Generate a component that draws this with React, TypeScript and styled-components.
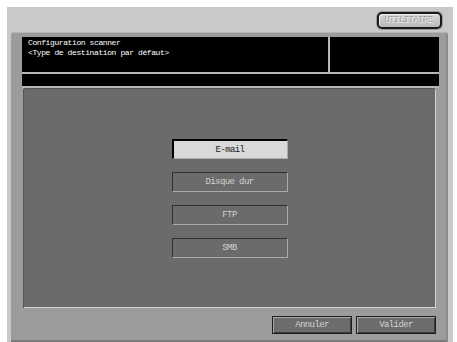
import styled, { createGlobalStyle } from 'styled-components'

const GlobalStyle = createGlobalStyle`
  html, body {
    margin: 0;
    padding: 0;
    background: #ffffff;
  }
  body {
    font-family: "Liberation Mono", "DejaVu Sans Mono", monospace;
  }
`

const Screen = styled.div`
  width: 457px;
  height: 342px;
  padding: 7px 4px 0 7px;
  box-sizing: border-box;
  background: #ffffff;
`

const Frame = styled.div`
  height: 335px;
  background: #c9c9c9;
  display: flex;
  flex-direction: column;
  box-sizing: border-box;
  padding: 5px 5px 0 4px;
`

const TopBar = styled.div`
  display: flex;
  justify-content: flex-end;
  padding-right: 6px;
  height: 20px;
`

const UtilButton = styled.button`
  width: 65px;
  height: 17px;
  border: 2px solid #1a1a1a;
  border-radius: 5px;
  background: linear-gradient(#d6d6d6, #b9b9b9);
  box-shadow: inset 1px 1px 0 #eeeeee, 0 0 0 1px #9a9a9a;
  font-family: "Liberation Mono", monospace;
  font-size: 9px;
  letter-spacing: -0.6px;
  color: #e6e6e6;
  text-shadow: -1px -1px 0 #999999;
  padding: 0;
`

const Panel = styled.div`
  flex: 1;
  background: #9c9c9c;
  border-radius: 3px 3px 0 0;
  box-shadow: inset 0 1px 0 #b4b4b4, inset -2px 0 0 #8a8a8a, inset 0 -2px 0 #7a7a7a;
  padding: 5px 9px 0 11px;
  display: flex;
  flex-direction: column;
`

const Header = styled.div`
  height: 35px;
  background: #000000;
  display: flex;
  border-bottom: 2px solid #b7b7b7;
`

const Title = styled.div`
  flex: 1;
  color: #ffffff;
  padding: 1px 0 0 6px;
  border-right: 2px solid #b7b7b7;
`

const TitleLine = styled.div`
  font-size: 8px;
  line-height: 9.5px;
  letter-spacing: -0.4px;
  white-space: pre;
`

const HeaderSide = styled.div`
  width: 109px;
`

const MessageBar = styled.div`
  height: 12px;
  background: #000000;
  border-bottom: 2px solid #b7b7b7;
`

const Content = styled.div`
  margin: 0 3px 0 1px;
  height: 219px;
  background: #6b6b6b;
  border-radius: 3px 3px 0 0;
  box-shadow: inset 1px 1px 0 #555555, inset -1px -1px 0 #d4d4d4;
  display: flex;
  flex-direction: column;
  align-items: center;
  justify-content: center;
  gap: 13px;
  padding-top: 1px;
`

const Choice = styled.button<{ $selected?: boolean }>`
  width: 116px;
  height: 20px;
  padding: 0;
  font-family: "Liberation Mono", monospace;
  font-size: 9px;
  letter-spacing: -0.6px;
  background: ${p => (p.$selected ? '#d9d9d9' : '#6b6b6b')};
  color: ${p => (p.$selected ? '#222222' : '#d2d2d2')};
  border: 1px solid #ababab;
  border-top-color: ${p => (p.$selected ? '#000000' : '#303030')};
  border-left-color: ${p => (p.$selected ? '#000000' : '#303030')};
  border-top-width: ${p => (p.$selected ? '2px' : '1px')};
  border-left-width: ${p => (p.$selected ? '2px' : '1px')};
`

const Footer = styled.div`
  display: flex;
  justify-content: flex-end;
  gap: 4px;
  padding: 8px 3px 0 0;
`

const FootButton = styled.button`
  width: 80px;
  height: 18px;
  padding: 0;
  font-family: "Liberation Mono", monospace;
  font-size: 9px;
  letter-spacing: -0.6px;
  background: #6d6d6d;
  color: #d2d2d2;
  border: 1px solid #1f1f1f;
  box-shadow: inset 1px 1px 0 #a8a8a8, inset -1px -1px 0 #3a3a3a;
`

const choices = ['E-mail', 'Disque dur', 'FTP', 'SMB']

export default function App() {
  return (
    <>
      <GlobalStyle />
      <Screen>
        <Frame>
          <TopBar>
            <UtilButton>UTILITAIRE</UtilButton>
          </TopBar>
          <Panel>
            <Header>
              <Title>
                <TitleLine>Configuration scanner</TitleLine>
                <TitleLine>{'<Type de destination par défaut>'}</TitleLine>
              </Title>
              <HeaderSide />
            </Header>
            <MessageBar />
            <Content>
              {choices.map((c, i) => (
                <Choice key={c} $selected={i === 0}>
                  {c}
                </Choice>
              ))}
            </Content>
            <Footer>
              <FootButton>Annuler</FootButton>
              <FootButton>Valider</FootButton>
            </Footer>
          </Panel>
        </Frame>
      </Screen>
    </>
  )
}
